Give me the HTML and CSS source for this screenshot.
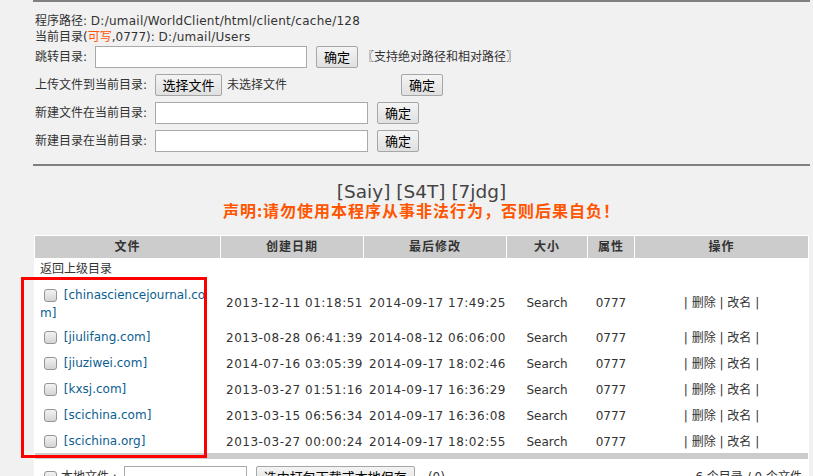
FILE: index.html
```html
<!DOCTYPE html>
<html>
<head>
<meta charset="utf-8">
<title>文件管理</title>
<link rel="stylesheet" href="styles.css">
</head>
<body>
<div class="page">
  <div class="rule"></div>
  <div class="info">
    <div>程序路径: <span class="lat">D:/umail/WorldClient/html/client/cache/128</span></div>
    <div>当前目录(<span class="hot">可写</span>,0777): <span class="lat">D:/umail/Users</span></div>
  </div>
  <div class="row">
    <span class="label short">跳转目录:</span>
    <input class="field" type="text">
    <button class="btn gap8">确定</button>
    <span class="tip">〖支持绝对路径和相对路径〗</span>
  </div>
  <div class="row">
    <span class="label">上传文件到当前目录:</span>
    <span class="file"><button class="btn">选择文件</button><span class="nofile">未选择文件</span></span>
    <button class="btn gap5">确定</button>
  </div>
  <div class="row">
    <span class="label">新建文件在当前目录:</span>
    <input class="field wide" type="text">
    <button class="btn gap8">确定</button>
  </div>
  <div class="row">
    <span class="label">新建目录在当前目录:</span>
    <input class="field wide" type="text">
    <button class="btn gap8">确定</button>
  </div>
  <div class="rule rule2"></div>
  <div class="title">[Saiy] [S4T] [7jdg]</div>
  <div class="warn">声明:请勿使用本程序从事非法行为，否则后果自负！</div>

  <table class="files">
    <thead>
      <tr>
        <th class="c1">文件</th>
        <th class="c2">创建日期</th>
        <th class="c3">最后修改</th>
        <th class="c4">大小</th>
        <th class="c5">属性</th>
        <th class="c6">操作</th>
      </tr>
    </thead>
    <tbody>
      <tr class="up"><td colspan="6">返回上级目录</td></tr>
      <tr>
        <td class="name first"><input class="chk" type="checkbox"> <a href="#">[chinasciencejournal.com]</a></td>
        <td class="date">2013-12-11 01:18:51</td><td class="date">2014-09-17 17:49:25</td><td>Search</td><td>0777</td><td>| 删除 | 改名 |</td>
      </tr>
      <tr>
        <td class="name"><input class="chk" type="checkbox"> <a href="#">[jiulifang.com]</a></td>
        <td class="date">2013-08-28 06:41:39</td><td class="date">2014-08-12 06:06:00</td><td>Search</td><td>0777</td><td>| 删除 | 改名 |</td>
      </tr>
      <tr>
        <td class="name"><input class="chk" type="checkbox"> <a href="#">[jiuziwei.com]</a></td>
        <td class="date">2014-07-16 03:05:39</td><td class="date">2014-09-17 18:02:46</td><td>Search</td><td>0777</td><td>| 删除 | 改名 |</td>
      </tr>
      <tr>
        <td class="name"><input class="chk" type="checkbox"> <a href="#">[kxsj.com]</a></td>
        <td class="date">2013-03-27 01:51:16</td><td class="date">2014-09-17 16:36:29</td><td>Search</td><td>0777</td><td>| 删除 | 改名 |</td>
      </tr>
      <tr>
        <td class="name"><input class="chk" type="checkbox"> <a href="#">[scichina.com]</a></td>
        <td class="date">2013-03-15 06:56:34</td><td class="date">2014-09-17 16:36:08</td><td>Search</td><td>0777</td><td>| 删除 | 改名 |</td>
      </tr>
      <tr>
        <td class="name"><input class="chk" type="checkbox"> <a href="#">[scichina.org]</a></td>
        <td class="date">2013-03-27 00:00:24</td><td class="date">2014-09-17 18:02:55</td><td>Search</td><td>0777</td><td>| 删除 | 改名 |</td>
      </tr>
      <tr class="bar"><td colspan="6"></td></tr>
      <tr class="foot">
        <td colspan="6">
          <div class="footrow">
            <span class="footleft"><input class="chk" type="checkbox"> 本地文件 : <input class="field small" type="text"><button class="btn pack">选中打包下载或本地保存</button><span class="count">(0)</span></span>
            <span class="footright">6 个目录 / 0 个文件</span>
          </div>
        </td>
      </tr>
    </tbody>
  </table>
</div>
<div class="mark"></div>
</body>
</html>
```
FILE: styles.css
```css
* { box-sizing: border-box; }
html { overflow: hidden; }
body {
  margin: 0;
  background: #f1f1f1;
  color: #333;
  font: 12px/16px "DejaVu Sans", "Noto Sans CJK SC", sans-serif;
}
.page {
  margin-left: 33px;
  width: 777px;
}
.rule {
  height: 2px;
  background: #808080;
}
.rule2 { margin-top: 12px; }
.info {
  margin-top: 11px;
  padding-left: 2px;
}
.lat { letter-spacing: 0.25px; }
.hot { color: #ff5500; }
.row {
  display: flex;
  align-items: center;
  height: 22px;
  margin-top: 6px;
  padding-left: 2px;
}
.info + .row { margin-top: 1px; }
.label { width: 120px; flex: none; white-space: nowrap; }
.label.short { width: 60px; }
.field {
  height: 22px;
  width: 212px;
  border: 1px solid #a9a9a9;
  background: #fff;
  margin: 0;
  padding: 0 2px;
  font: inherit;
}
.field.wide { width: 213px; }
.btn {
  height: 22px;
  margin: 0;
  padding: 0 7px;
  border: 1px solid #a6a6a6;
  border-radius: 2px;
  background: linear-gradient(#f4f4f4, #e0e0e0);
  color: #000;
  font: 13px/20px "Noto Sans CJK SC", "DejaVu Sans", sans-serif;
  white-space: nowrap;
}
.gap8 { margin-left: 9px; }
.gap5 { margin-left: 5px; }
.tip { margin-left: 4px; white-space: nowrap; }
.file {
  display: inline-flex;
  align-items: center;
  width: 241px;
}
.file .btn { width: 67px; padding: 0; }
.nofile { margin-left: 5px; }
.title {
  margin-top: 15px;
  text-align: center;
  font-size: 18.5px;
  line-height: 21px;
  color: #444;
}
.warn {
  text-align: center;
  font: bold 16px/17px "Noto Sans CJK SC", sans-serif;
  letter-spacing: 1px;
  color: #ff5500;
}
.files {
  margin: 16px 0 0 1px;
  width: 775px;
  table-layout: fixed;
  border-spacing: 1px;
  background: #fff;
}
.files th {
  height: 22px;
  padding: 0;
  background: #cccccc;
  font-weight: bold;
  letter-spacing: 1px;
  line-height: 22px;
  text-align: center;
}
.c1 { width: 185px; }
.c2 { width: 142px; }
.c3 { width: 142px; }
.c4 { width: 80px; }
.c5 { width: 46px; }
.c6 { width: 173px; }
.files td {
  padding: 5px 5px 1px;
  text-align: center;
  vertical-align: middle;
  white-space: nowrap;
}
.files td.date { letter-spacing: 0.5px; }
.files td.name {
  text-align: left;
  white-space: normal;
  word-break: break-all;
}
.files td.first { padding-top: 7px; }
.files tr.up td { padding: 2px 5px 1px; text-align: left; }
.files a { color: #0b5e8f; text-decoration: none; }
.chk {
  -webkit-appearance: none;
  appearance: none;
  width: 13px;
  height: 13px;
  margin: 3px 3px 3px 4px;
  vertical-align: middle;
  border: 1px solid #959595;
  border-radius: 3px;
  background: linear-gradient(#f2f2f2, #d4d4d4);
}
.files tr.bar td {
  height: 6px;
  padding: 0;
  background: #cccccc;
}
.files tr.foot td { padding: 6px 5px; text-align: left; }
.footrow {
  display: flex;
  justify-content: space-between;
  align-items: center;
}
.footleft { display: inline-flex; align-items: center; white-space: nowrap; }
.footleft .chk { margin: 0 4px 0 4px; }
.field.small { width: 123px; margin-left: 7px; }
.pack { margin-left: 9px; }
.count { margin-left: 13px; }
.footright { margin-right: 1px; }
.mark {
  position: absolute;
  left: 21px;
  top: 277px;
  width: 186px;
  height: 181px;
  border: 3px solid #ff0000;
}
```
